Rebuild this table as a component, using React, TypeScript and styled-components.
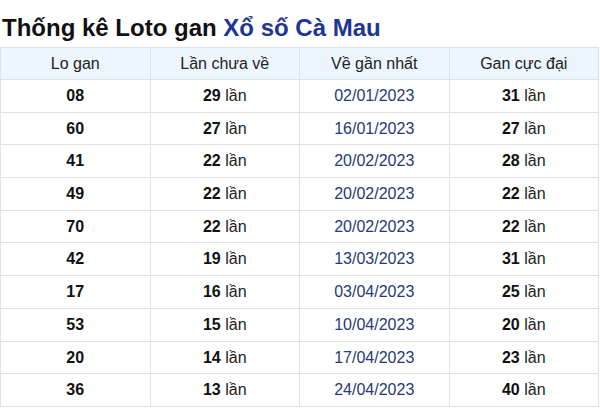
import styled, { createGlobalStyle } from "styled-components";

const GlobalStyle = createGlobalStyle`
  body {
    margin: 0;
    background: #fff;
    font-family: "Liberation Sans", Arial, sans-serif;
  }
`;

const Wrapper = styled.section`
  width: 600px;
  padding-top: 14px;
`;

const Title = styled.h2`
  margin: 0 0 5px 2px;
  font-size: 24px;
  line-height: 28px;
  font-weight: bold;
  color: #111;
`;

const Place = styled.span`
  color: #1c3596;
`;

const Table = styled.table`
  width: 599px;
  border-collapse: collapse;
  table-layout: fixed;
  font-size: 16px;
  color: #222;
`;

const Head = styled.th`
  background-color: #edf5fe;
  border: 1px solid #dfe3e8;
  font-weight: normal;
  line-height: 24px;
  padding: 4px 4px 3px;
  text-align: center;
`;

const Cell = styled.td<{ date?: boolean }>`
  border: 1px solid #e1e1e1;
  line-height: 24px;
  padding: 4px 4px 3.7px;
  text-align: center;
  color: ${(props) => (props.date ? "#263a78" : "#222")};
`;

const Num = styled.b`
  color: #111;
`;

interface IRow {
  lo: string;
  chua: number;
  date: string;
  max: number;
}

const rows: IRow[] = [
  { lo: "08", chua: 29, date: "02/01/2023", max: 31 },
  { lo: "60", chua: 27, date: "16/01/2023", max: 27 },
  { lo: "41", chua: 22, date: "20/02/2023", max: 28 },
  { lo: "49", chua: 22, date: "20/02/2023", max: 22 },
  { lo: "70", chua: 22, date: "20/02/2023", max: 22 },
  { lo: "42", chua: 19, date: "13/03/2023", max: 31 },
  { lo: "17", chua: 16, date: "03/04/2023", max: 25 },
  { lo: "53", chua: 15, date: "10/04/2023", max: 20 },
  { lo: "20", chua: 14, date: "17/04/2023", max: 23 },
  { lo: "36", chua: 13, date: "24/04/2023", max: 40 },
];

export default function App() {
  return (
    <Wrapper>
      <GlobalStyle />
      <Title>
        Thống kê Loto gan <Place>Xổ số Cà Mau</Place>
      </Title>
      <Table>
        <thead>
          <tr>
            <Head>Lo gan</Head>
            <Head>Lần chưa về</Head>
            <Head>Về gần nhất</Head>
            <Head>Gan cực đại</Head>
          </tr>
        </thead>
        <tbody>
          {rows.map((row) => (
            <tr key={row.lo}>
              <Cell>
                <Num>{row.lo}</Num>
              </Cell>
              <Cell>
                <Num>{row.chua}</Num> lần
              </Cell>
              <Cell date>{row.date}</Cell>
              <Cell>
                <Num>{row.max}</Num> lần
              </Cell>
            </tr>
          ))}
        </tbody>
      </Table>
    </Wrapper>
  );
}
